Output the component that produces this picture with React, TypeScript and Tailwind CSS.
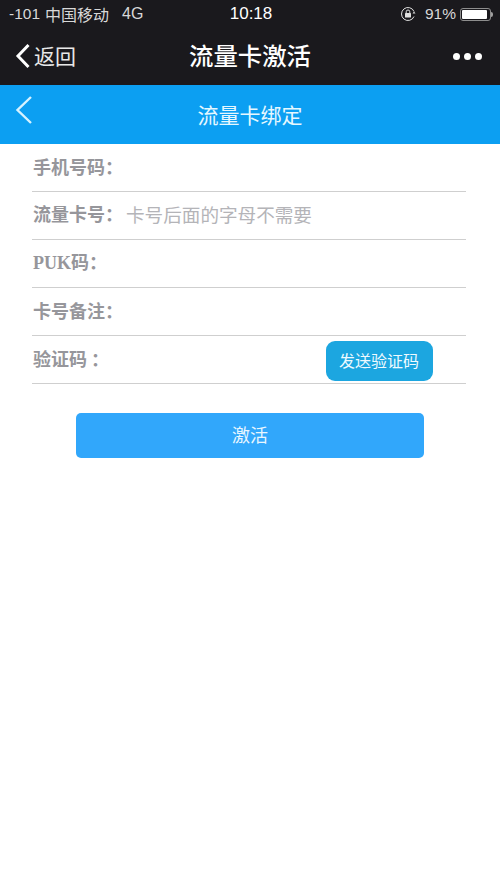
const font = { fontFamily: '"Noto Sans CJK SC", "Liberation Sans", sans-serif' }

function Row({ label, hint, children }: { label: React.ReactNode; hint?: string; children?: React.ReactNode }) {
  return (
    <div className="flex h-12 items-center justify-between border-b border-[#cfcfcf]">
      <div className="flex items-center pb-[3px] pl-[1px]">
        <span className="text-[18px] font-bold text-[#96969b]">{label}</span>
        {hint && <span className="ml-[3px] text-[18.6px] text-[#b4b4b8]">{hint}</span>}
      </div>
      {children}
    </div>
  )
}

export default function App() {
  return (
    <div className="h-[889px] w-[500px] overflow-hidden bg-white" style={font}>
      <div className="h-[85px] bg-[#1a191d] text-white">
        <div className="flex h-[28px] items-center justify-between pl-[9px] pr-[7px] text-[15px]">
          <div className="flex w-[170px] items-center text-[#d8d8d8]">
            <span className="font-['Liberation_Sans'] text-[15.5px]">-101</span>
            <span className="ml-[5px] text-[16px]">中国移动</span>
            <span className="ml-[13px] font-['Liberation_Sans'] text-[16px]">4G</span>
          </div>
          <span className="font-['Liberation_Sans'] text-[17px] font-medium">10:18</span>
          <div className="flex w-[170px] items-center justify-end text-[#d8d8d8]">
            <svg width="16" height="16" viewBox="0 0 16 16" fill="none" className="mr-[9px]">
              <path d="M14 5.5A6.5 6.5 0 1 0 14 10.5" stroke="#e0e0e0" strokeWidth="1" />
              <path d="M12.5 7.5h3L14 5.5z" fill="#e0e0e0" />
              <rect x="5" y="7" width="6" height="4.5" rx="0.5" fill="#e0e0e0" />
              <path d="M6.2 7V5.8a1.8 1.8 0 0 1 3.6 0V7" stroke="#e0e0e0" strokeWidth="1" />
            </svg>
            <span className="font-['Liberation_Sans'] text-[15.5px]">91%</span>
            <div className="ml-[4px] flex h-[13px] w-[31px] items-center rounded-[3px] border border-[#8d8d8d] p-[1px]">
              <div className="h-full w-[25px] rounded-[1px] bg-white" />
            </div>
            <div className="h-[5px] w-[2px] rounded-r-sm bg-[#a0a0a0]" />
          </div>
        </div>
        <div className="flex h-[56px] items-center justify-between">
          <div className="flex w-[120px] items-center pl-[15px]">
            <svg width="16" height="26" viewBox="0 0 16 26" fill="none">
              <path d="M13.5 2 3 13l10.5 11" stroke="white" strokeWidth="3" />
            </svg>
            <span className="ml-[3px] pb-[2px] text-[21px] leading-none text-[#e8e8e8]">返回</span>
          </div>
          <span className="pb-[2px] text-[24.4px] font-medium">流量卡激活</span>
          <div className="flex w-[120px] justify-end gap-[4px] pr-[18px]">
            <div className="h-[7px] w-[7px] rounded-full bg-white" />
            <div className="h-[7px] w-[7px] rounded-full bg-white" />
            <div className="h-[7px] w-[7px] rounded-full bg-white" />
          </div>
        </div>
      </div>

      <div className="flex h-[59px] items-center bg-[#0c9ff2] text-white">
        <div className="w-[60px] pb-[10px] pl-[14px]">
          <svg width="20" height="30" viewBox="0 0 20 30" fill="none">
            <path d="M17 2 3.5 15 17 28" stroke="#d6f2ff" strokeWidth="2.4" />
          </svg>
        </div>
        <span className="flex-1 text-center text-[21px] text-[#e6f8ff]">流量卡绑定</span>
        <div className="w-[60px]" />
      </div>

      <div className="ml-[32px] w-[434px]">
        <Row label="手机号码：" />
        <Row label="流量卡号：" hint="卡号后面的字母不需要" />
        <Row label={<><span className="font-['Liberation_Serif']">PUK</span>码：</>} />
        <Row label="卡号备注：" />
        <Row label="验证码 ：">
          <button className="mr-[33px] mt-[3px] h-[40px] w-[107px] rounded-[9px] bg-[#1ca6e0] pb-[3px] pr-[1px] text-[16px] text-[#eefaff]">
            发送验证码
          </button>
        </Row>
      </div>

      <div className="mt-[29px] flex justify-center">
        <button className="h-[45px] w-[348px] rounded-[5px] bg-[#31a7fb] pb-[2px] text-[18px] text-[#e8f6ff]">激活</button>
      </div>
    </div>
  )
}
